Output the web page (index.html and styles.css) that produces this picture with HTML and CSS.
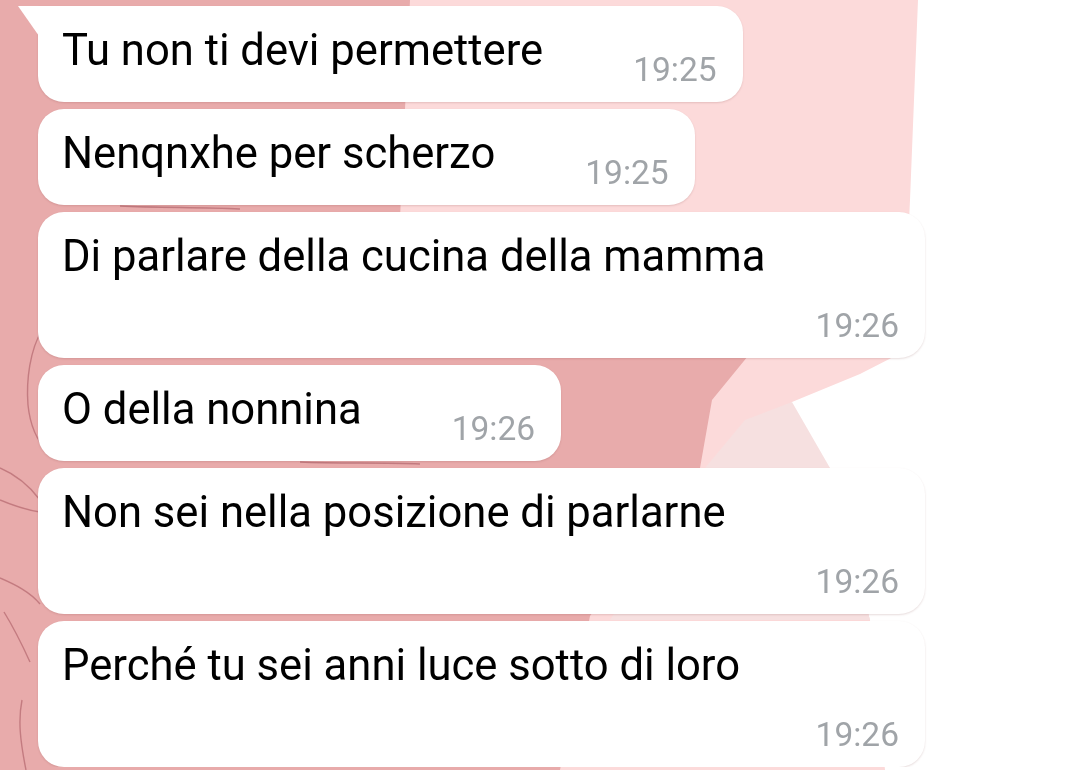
FILE: index.html
```html
<!DOCTYPE html>
<html lang="it">
<head>
    <meta charset="UTF-8">
    <meta name="viewport" content="width=device-width, initial-scale=1.0">
    <title>Chat</title>
    <link rel="stylesheet" href="styles.css">
</head>
<body>
    <svg class="wallpaper" viewBox="0 0 1080 770" preserveAspectRatio="none">
        <polygon fill="#fcdada" points="0,0 918,0 910,200 903,352 860,374 792,402 765,430 830,468 870,620 885,770 0,770"/>
        <polygon fill="#f6e0e0" points="705,468 745,420 792,402 830,468 870,620 610,620"/>
        <polygon fill="#e8abab" points="0,0 410,0 400,218 560,300 748,356 712,400 700,468 590,616 560,770 0,770"/>
        <g class="doodle">
            <path d="M42 330 C30 350 26 380 28 405 C30 425 36 440 48 452"/>
            <path d="M0 468 C14 474 28 484 40 500"/>
            <path d="M0 500 C12 505 26 510 40 512"/>
            <path d="M0 578 C16 585 30 592 40 604"/>
            <path d="M4 612 C12 625 20 640 30 662"/>
            <path d="M22 700 C18 720 20 740 26 770"/>
            <path d="M120 206 C160 208 200 207 240 209"/>
            <path d="M300 462 C340 464 380 462 420 464"/>
        </g>
    </svg>

    <div class="chat">
        <div class="bubble first">
            <span class="text">Tu non ti devi permettere</span>
            <span class="time">19:25</span>
        </div>
        <div class="bubble">
            <span class="text">Nenqnxhe per scherzo</span>
            <span class="time">19:25</span>
        </div>
        <div class="bubble wide">
            <span class="text">Di parlare della cucina della mamma</span>
            <span class="time">19:26</span>
        </div>
        <div class="bubble">
            <span class="text">O della nonnina</span>
            <span class="time">19:26</span>
        </div>
        <div class="bubble wide">
            <span class="text">Non sei nella posizione di parlarne</span>
            <span class="time">19:26</span>
        </div>
        <div class="bubble wide">
            <span class="text">Perché tu sei anni luce sotto di loro</span>
            <span class="time">19:26</span>
        </div>
    </div>
</body>
</html>
```

FILE: styles.css
```css
body {
    margin: 0;
    font-family: Roboto, 'Noto Sans', Arial, sans-serif;
    background-color: #fff;
    overflow: hidden;
}
.wallpaper {
    position: fixed;
    top: 0;
    left: 0;
    width: 1080px;
    height: 770px;
    z-index: -1;
}
.doodle path {
    fill: none;
    stroke: #b4676d;
    stroke-width: 1.4;
    opacity: 0.7;
}
.chat {
    display: flex;
    flex-direction: column;
    align-items: flex-start;
    gap: 7px;
    padding: 6px 0 0 38px;
}
.bubble {
    display: flex;
    flex-wrap: wrap;
    align-items: flex-end;
    width: fit-content;
    max-width: 887px;
    box-sizing: border-box;
    padding: 19px 26px 12px 24px;
    background-color: #fff;
    border-radius: 26px;
    box-shadow: 0 1px 2px rgba(120, 60, 60, 0.18);
}
.bubble.wide {
    width: 887px;
}
.bubble.first {
    position: relative;
    border-top-left-radius: 0;
}
.bubble.first::before {
    content: "";
    position: absolute;
    left: -20px;
    top: 0;
    width: 21px;
    height: 30px;
    background-color: #fff;
    clip-path: polygon(0 0, 100% 0, 100% 100%);
}
.text {
    font-size: 43.6px;
    line-height: 52px;
    padding-bottom: 13px;
    color: #000;
}
.time {
    flex: 1 0 auto;
    text-align: right;
    padding-left: 90px;
    margin-top: 10px;
    font-size: 33.5px;
    line-height: 40px;
    color: #a0a4a8;
}
.wide .time {
    flex-basis: 100%;
    padding-left: 0;
}
```
